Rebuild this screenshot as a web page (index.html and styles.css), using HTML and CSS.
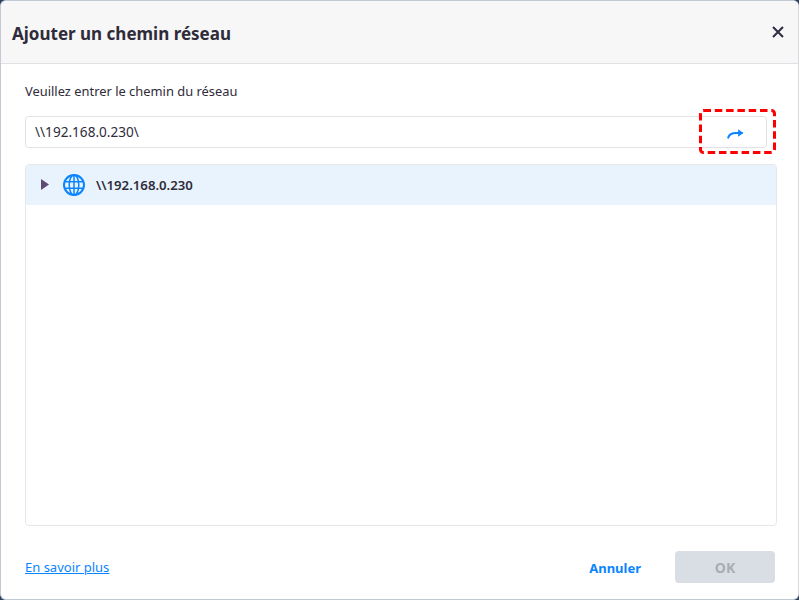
FILE: index.html
```html
<!DOCTYPE html>
<html lang="fr">
<head>
<meta charset="utf-8">
<title>Ajouter un chemin réseau</title>
<link rel="stylesheet" href="styles.css">
</head>
<body>
<div class="dialog">
  <header class="head">
    <h1 class="title">Ajouter un chemin réseau</h1>
    <svg class="close" width="12" height="12" viewBox="0 0 12 12"><path d="M1 1l10 10M11 1L1 11" stroke="#2f2c42" stroke-width="2" fill="none"/></svg>
  </header>
  <main class="content">
    <div class="label">Veuillez entrer le chemin du réseau</div>
    <div class="inputrow">
      <div class="input">\\192.168.0.230\</div>
      <div class="go">
        <svg width="17" height="11" viewBox="0 0 17 11"><path d="M1.2 9.6C2.2 6.4 5 5 9 5h6" stroke="#0a84ff" stroke-width="2" fill="none" stroke-linecap="round"/><path d="M11.2 1.2L16.2 5L11.2 8.8z" fill="#0a84ff"/></svg>
      </div>
      <svg class="mark" width="77" height="45" viewBox="0 0 77 45"><rect x="1.5" y="1.5" width="74" height="42" rx="3" fill="none" stroke="#f00" stroke-width="3" stroke-dasharray="7.5 3.8"/></svg>
    </div>
    <div class="tree">
      <div class="row">
        <svg class="caret" width="8" height="11" viewBox="0 0 8 11"><path d="M0 0l8 5.5L0 11z" fill="#5e4a72"/></svg>
        <svg class="globe" width="24" height="24" viewBox="0 0 24 24" fill="none" stroke="#0a84ff">
          <circle cx="12" cy="12" r="10" stroke-width="2"/>
          <ellipse cx="12" cy="12" rx="4.8" ry="10" stroke-width="1.5"/>
          <path d="M2.5 8.8h19M2.5 15.2h19M12 2v20" stroke-width="1.5"/>
        </svg>
        <span class="path">\\192.168.0.230</span>
      </div>
    </div>
  </main>
  <footer class="foot">
    <a class="more" href="#">En savoir plus</a>
    <div class="actions">
      <span class="cancel">Annuler</span>
      <span class="ok">OK</span>
    </div>
  </footer>
</div>
</body>
</html>
```
FILE: styles.css
```css
* { box-sizing: border-box; }
html, body { margin: 0; height: 100%; background: #2d3f5e; }
body { font-family: "Noto Sans", "Open Sans", sans-serif; color: #2f2c3a; overflow: hidden; }
.dialog {
  width: 799px; height: 600px; background: #fff;
  border: 1px solid #c3cad6; border-right-color: #d5d9e0; border-radius: 6px;
  display: flex; flex-direction: column; overflow: hidden;
}
.head {
  height: 63px; flex: none; background: #f7f7f8; border-bottom: 1px solid #dfe1e5;
  display: flex; align-items: center; justify-content: space-between;
  padding: 0 14px 0 11px;
}
.title { margin: 2px 0 0; font-size: 17px; font-weight: 700; color: #2f2c3a; }
.content { flex: 1; padding: 16px 21px 0 24px; display: flex; flex-direction: column; min-height: 0; }
.label { font-size: 12.9px; line-height: 22px; height: 22px; }
.inputrow { position: relative; display: flex; margin-top: 14px; height: 32px; width: 742px;
  border: 1px solid #e0e2e6; border-radius: 4px; align-items: center; }
.input { flex: 1; padding-left: 9px; font-size: 13.6px; }
.go { width: 62px; padding-top: 3px; display: flex; justify-content: center; align-items: center; }
.mark { position: absolute; left: 673px; top: -8px; }
.tree { margin-top: 16px; height: 363px; border: 1px solid #e6e7ea; border-radius: 4px; overflow: hidden; }
.row { height: 40px; background: #e8f3fd; display: flex; align-items: center; padding-left: 15px; }
.caret { margin-right: 13px; }
.globe { margin-right: 10px; }
.path { font-size: 13.2px; font-weight: 600; padding-top: 1px; }
.foot { height: 73px; flex: none; padding: 0 23px 16px 24px; display: flex; align-items: flex-end; justify-content: space-between; }
.more { font-size: 13px; color: #0a84ff; text-decoration: underline; line-height: 20px; margin-bottom: 6px; }
.actions { display: flex; align-items: center; gap: 34px; }
.cancel { font-size: 13px; font-weight: 700; color: #0a84ff; padding-top: 2px; }
.ok { width: 100px; height: 32px; border-radius: 4px; background: #d9dde4; color: #a7adb7;
  font-size: 14px; font-weight: 700; display: flex; align-items: center; justify-content: center; }
```
